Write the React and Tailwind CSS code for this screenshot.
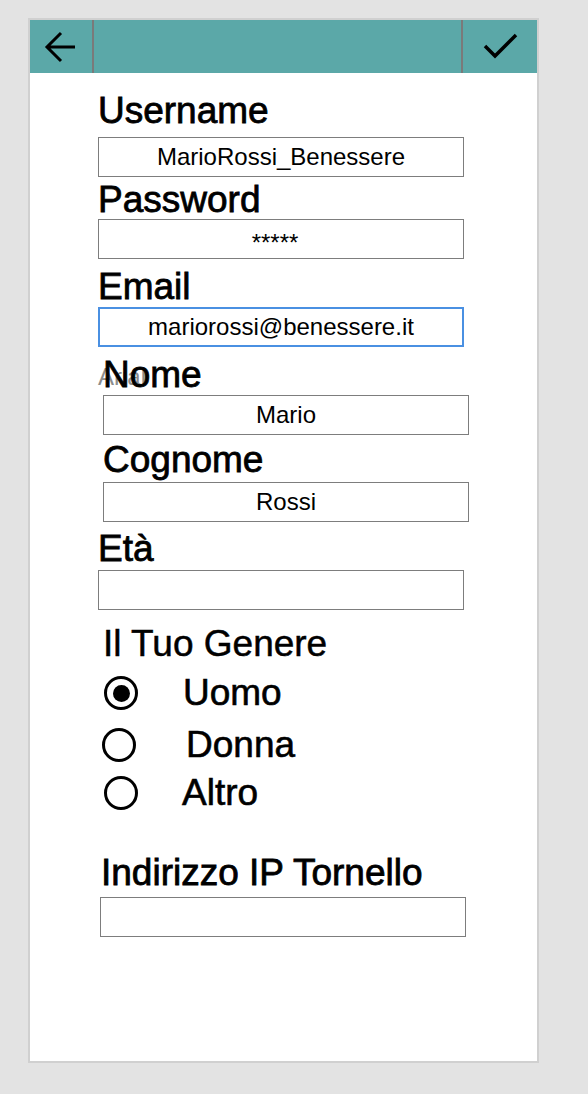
import React, { useState } from "react";

const font = { fontFamily: '"Liberation Sans", Arial, sans-serif' };

// Text field with a big label above it, mockup style
const Field = ({ label, value, labelClass, boxClass, border = "border border-[#7d7d7d]", ghost }) => (
  <div className="flex flex-col">
    <div
      className={`relative h-[36px] text-[37px] leading-[36px] text-black [-webkit-text-stroke:0.8px_#000] ${labelClass}`}
    >
      {ghost && (
        <span className="absolute left-[-5px] top-[8px] text-[24px] leading-[24px] text-[#8c8c8c] [-webkit-text-stroke:0px]">
          {ghost}
        </span>
      )}
      <span className="relative">{label}</span>
    </div>
    <div
      className={`h-[40px] w-[366px] ${border} flex items-center justify-center text-[24px] text-black bg-white ${boxClass}`}
    >
      {value}
    </div>
  </div>
);

const Radio = ({ checked, label, rowClass, circleClass, labelClass }) => (
  <div className={`flex items-center h-[36px] ${rowClass}`}>
    <div
      className={`w-[34px] h-[34px] rounded-full border-[3px] border-black flex items-center justify-center ${circleClass}`}
    >
      {checked && <div className="w-[17px] h-[17px] rounded-full bg-black" />}
    </div>
    <span className={`text-[37px] leading-[36px] text-black [-webkit-text-stroke:0.6px_#000] ${labelClass}`}>
      {label}
    </span>
  </div>
);

const App = () => {
  const [gender] = useState("Uomo");

  return (
    <div className="w-[588px] h-[1094px] bg-[#e3e3e3] pt-[18px] pl-[28px]" style={font}>
      <div className="w-[511px] h-[1045px] border-2 border-[#d0d0d0] bg-white flex flex-col">
        {/* top bar */}
        <div className="h-[53px] bg-[#5ba8a8] flex">
          <div className="w-[64px] border-r-2 border-[#7a7a7a] flex items-center justify-center">
            <svg width="34" height="34" viewBox="0 0 34 34" fill="none" stroke="black" strokeWidth="3">
              <path d="M31 14H3M17 0L3 14L17 28" transform="translate(0 3)" />
            </svg>
          </div>
          <div className="flex-1" />
          <div className="w-[76px] border-l-2 border-[#7a7a7a] flex items-center justify-center">
            <svg width="36" height="28" viewBox="0 0 36 28" fill="none" stroke="black" strokeWidth="3.5">
              <path d="M3 13L13 23L34 2" />
            </svg>
          </div>
        </div>

        <div className="flex flex-col">
          <Field
            label="Username"
            value="MarioRossi_Benessere"
            labelClass="mt-[20px] ml-[68px]"
            boxClass="mt-[8px] ml-[68px]"
          />
          <Field
            label="Password"
            value="*****"
            labelClass="mt-[5px] ml-[68px]"
            boxClass="mt-[1px] ml-[68px] pr-[12px] items-start pt-[5px]"
          />
          <Field
            label="Email"
            value="mariorossi@benessere.it"
            labelClass="mt-[10px] ml-[68px]"
            boxClass="mt-[2px] ml-[68px]"
            border="border-2 border-[#4a90e2]"
          />
          <Field
            label="Nome"
            value="Mario"
            ghost="Arial"
            labelClass="mt-[10px] ml-[73px]"
            boxClass="mt-[2px] ml-[73px]"
          />
          <Field
            label="Cognome"
            value="Rossi"
            labelClass="mt-[7px] ml-[73px]"
            boxClass="mt-[4px] ml-[73px]"
          />
          <Field
            label="Età"
            value=""
            labelClass="mt-[9px] ml-[68px]"
            boxClass="mt-[3px] ml-[68px]"
          />

          <div className="mt-[16px] ml-[73px] h-[36px] text-[37px] leading-[36px] text-black [-webkit-text-stroke:0.5px_#000]">
            Il Tuo Genere
          </div>
          <Radio
            checked={gender === "Uomo"}
            label="Uomo"
            rowClass="mt-[13px] ml-[74px]"
            labelClass="ml-[45px]"
          />
          <Radio
            checked={gender === "Donna"}
            label="Donna"
            rowClass="mt-[16px] ml-[72px]"
            labelClass="ml-[50px]"
          />
          <Radio
            checked={gender === "Altro"}
            label="Altro"
            rowClass="mt-[12px] ml-[74px]"
            labelClass="ml-[44px]"
          />

          <Field
            label="Indirizzo IP Tornello"
            value=""
            labelClass="mt-[44px] ml-[71px]"
            boxClass="mt-[6px] ml-[70px]"
          />
        </div>
      </div>
    </div>
  );
};

export default App;
